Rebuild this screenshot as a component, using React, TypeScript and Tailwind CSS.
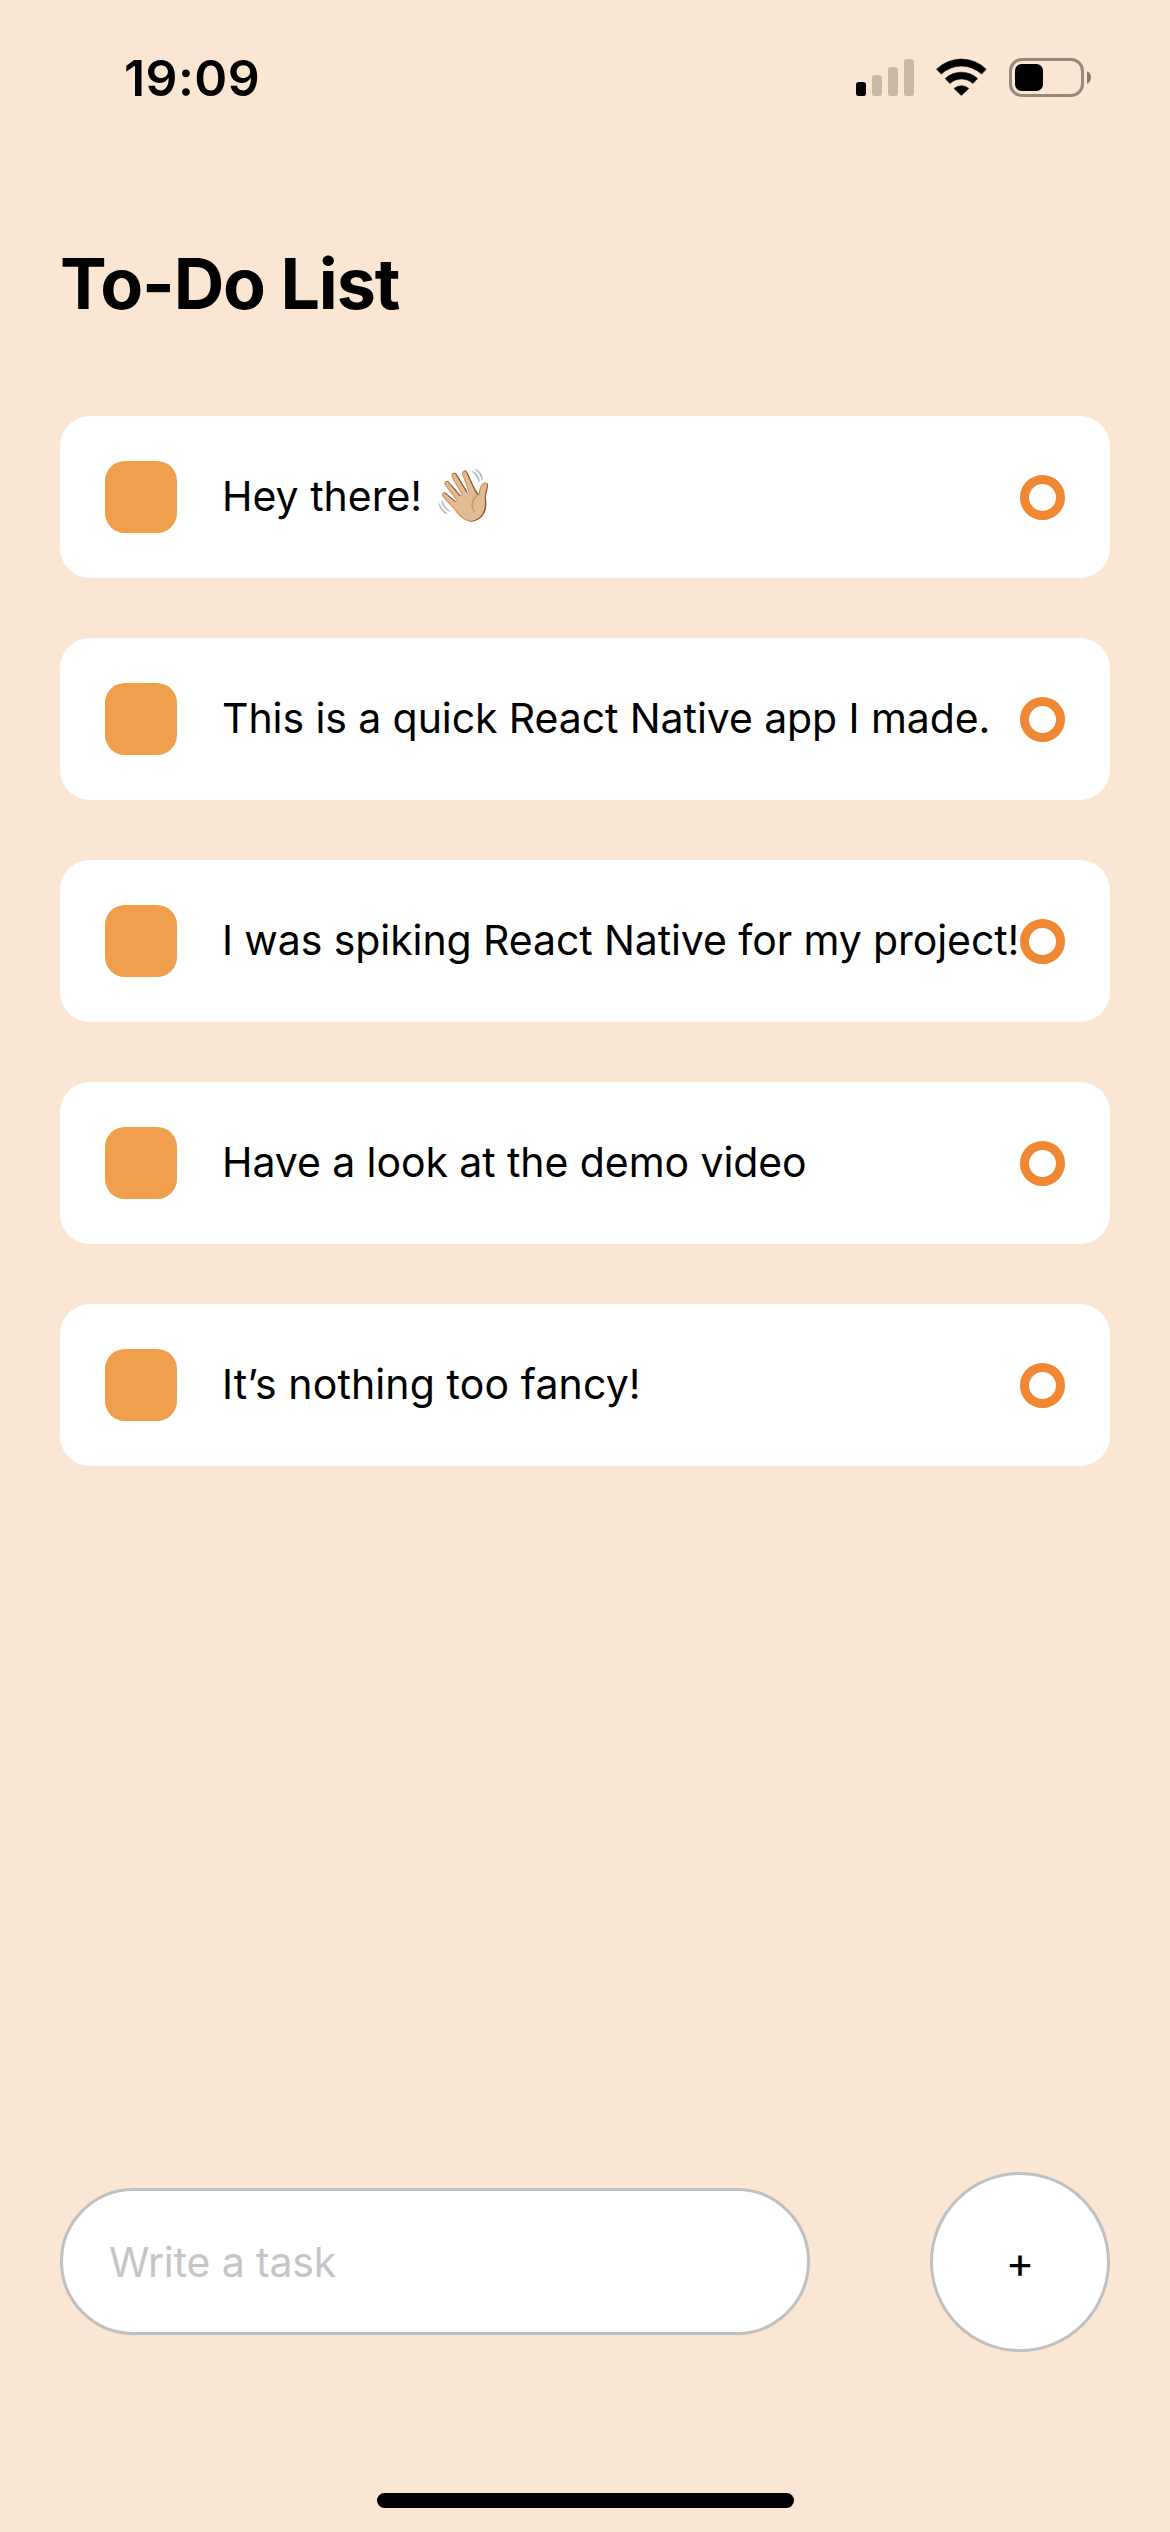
import { useState } from "react";

type Task = { text: string; emoji?: string; tracking: string };

const initialTasks: Task[] = [
  { text: "Hey there!", emoji: "👋🏼", tracking: "tracking-normal" },
  { text: "This is a quick React Native app I made.", tracking: "tracking-[-0.085px]" },
  { text: "I was spiking React Native for my project!", tracking: "tracking-[-0.09px]" },
  { text: "Have a look at the demo video", tracking: "tracking-[-0.08px]" },
  { text: "It’s nothing too fancy!", tracking: "tracking-[0.12px]" },
];

function StatusIcons() {
  return (
    <svg className="h-[40px] w-[236px]" viewBox="856 58 236 40" fill="none">
      <rect x="856" y="82" width="10" height="14" rx="2.8" fill="#000" />
      <g fill="#c9b8a6">
        <rect x="872" y="75" width="10" height="21" rx="2.8" />
        <rect x="888" y="67" width="10" height="29" rx="2.8" />
        <rect x="904" y="59" width="10" height="37" rx="2.8" />
      </g>
      <g fill="#000" stroke="#000" strokeWidth="0.6" strokeLinejoin="round">
        <path d="M936.6 69.2A35.5 35.5 0 0 1 986.2 69.2L981.6 74.1A29.5 29.5 0 0 0 941.2 74.1Z" />
        <path d="M945.3 78.6A23.5 23.5 0 0 1 977.5 78.6L973 83.4A17.2 17.2 0 0 0 949.8 83.4Z" />
        <path d="M954 88.4A11.5 11.5 0 0 1 968.8 88.4L961.4 95.6Z" />
      </g>
      <rect x="1010.5" y="59.5" width="72" height="36" rx="11.5" stroke="#968a7c" strokeWidth="3" />
      <rect x="1015" y="64" width="28" height="27" rx="6.5" fill="#000" />
      <path d="M1087 71.3C1089.5 72.4 1091 74.6 1091 77.5C1091 80.4 1089.5 82.6 1087 83.7Z" fill="#84776e" />
    </svg>
  );
}

function TaskRow({ task }: { task: Task }) {
  return (
    <li className="flex h-[162px] items-center justify-between rounded-[30px] bg-white px-[45px]">
      <div className="flex items-center">
        <span className="mr-[45px] size-[72px] shrink-0 rounded-[20px] bg-[#f09f4c]" />
        <span className={`pb-[2px] text-[41px] leading-[54px] whitespace-nowrap ${task.tracking}`}>{task.text}</span>
        {task.emoji && <span className="ml-[11px] pb-[5px] text-[51px] leading-[54px]">{task.emoji}</span>}
      </div>
      <span className="mt-px size-[45px] shrink-0 rounded-full border-[9px] border-[#ef8733]" />
    </li>
  );
}

export default function App() {
  const [tasks, setTasks] = useState(initialTasks);
  const [draft, setDraft] = useState("");

  const addTask = () => {
    if (!draft.trim()) return;
    setTasks([...tasks, { text: draft.trim(), tracking: "tracking-normal" }]);
    setDraft("");
  };

  return (
    <div className="flex h-[2532px] w-[1170px] flex-col overflow-hidden bg-[#fae6d2] font-['Inter',sans-serif] text-black">
      <header className="flex h-[156px] items-center justify-between pr-[78px] pl-[124px]">
        <span className="text-[50px] leading-[60px] font-semibold tracking-[0.4px]">19:09</span>
        <StatusIcons />
      </header>

      <main className="flex flex-1 flex-col px-[60px]">
        <h1 className="mt-[86px] text-[70px] leading-[84px] font-bold tracking-[-1.1px]">To-Do List</h1>
        <ul className="mt-[90px] flex flex-col gap-[60px]">
          {tasks.map((task, i) => (
            <TaskRow key={i} task={task} />
          ))}
        </ul>
      </main>

      <form
        className="flex items-center justify-between px-[60px] pb-[141px]"
        onSubmit={(e) => {
          e.preventDefault();
          addTask();
        }}
      >
        <input
          className="mb-px h-[147px] w-[750px] rounded-full border-[3px] border-[#c0c0c0] bg-white px-[46px] text-[41px] tracking-[-0.13px] outline-none placeholder:text-[#c5c5c7]"
          placeholder="Write a task"
          value={draft}
          onChange={(e) => setDraft(e.target.value)}
        />
        <button
          type="submit"
          className="flex size-[180px] items-center justify-center rounded-full border-[3px] border-[#c0c0c0] bg-white text-[43px] leading-[54px]"
        >
          +
        </button>
      </form>

      <div className="flex h-[39px] justify-center">
        <div className="h-[15px] w-[417px] rounded-full bg-black" />
      </div>
    </div>
  );
}
